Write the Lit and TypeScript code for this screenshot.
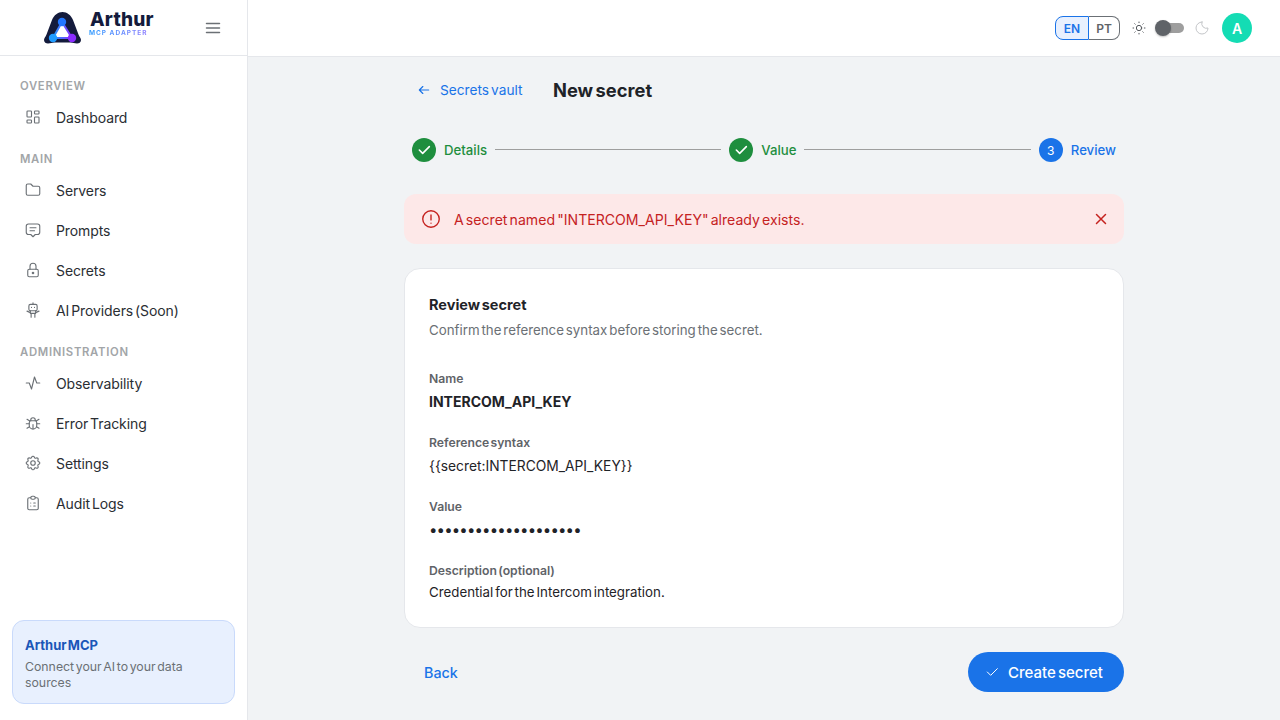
import { LitElement, html, css, svg } from 'lit';
import { customElement } from 'lit/decorators.js';

const icons: Record<string, unknown> = {
  dashboard: svg`<rect x="4" y="4" width="6" height="8" rx="1"/><rect x="4" y="16" width="6" height="4" rx="1"/><rect x="14" y="12" width="6" height="8" rx="1"/><rect x="14" y="4" width="6" height="4" rx="1"/>`,
  folder: svg`<path d="M5 4h4l3 3h7a2 2 0 0 1 2 2v8a2 2 0 0 1-2 2H5a2 2 0 0 1-2-2V6a2 2 0 0 1 2-2"/>`,
  message: svg`<path d="M8 9h8M8 13h6"/><path d="M9 18H6a3 3 0 0 1-3-3V7a3 3 0 0 1 3-3h12a3 3 0 0 1 3 3v8a3 3 0 0 1-3 3h-3l-3 3z"/>`,
  lock: svg`<rect x="5" y="11" width="14" height="10" rx="2"/><circle cx="12" cy="16" r="1"/><path d="M8 11V7a4 4 0 0 1 8 0v4"/>`,
  robot: svg`<rect x="6.500" y="4.500" width="11" height="8.500" rx="2"/><path d="M12 2.500v2M10 8.500h.01M14 8.500h.01M8.500 13v3.500h7V13M4 13.500l4.500 2M20 13.500l-4.500 2M9.500 16.500v5M14.500 16.500v5"/>`,
  activity: svg`<path d="M3 12h4l3 8 4-16 3 8h4"/>`,
  bug: svg`<path d="M9 9V8a3 3 0 0 1 6 0v1"/><path d="M8 9h8a6 6 0 0 1 1 3v3a5 5 0 0 1-10 0v-3a6 6 0 0 1 1-3"/><path d="M3 13h4M17 13h4M12 20v-6M4 19l3.35-2M20 19l-3.35-2M4 7l3.75 2.4M20 7l-3.75 2.4"/>`,
  settings: svg`<path d="M10.3 4.3c.4-1.8 3-1.8 3.4 0a1.7 1.7 0 0 0 2.6 1.1c1.5-.9 3.3.8 2.4 2.4a1.7 1.7 0 0 0 1 2.5c1.8.4 1.8 3 0 3.4a1.7 1.7 0 0 0-1 2.6c.9 1.5-.9 3.3-2.4 2.4a1.7 1.7 0 0 0-2.6 1c-.4 1.8-3 1.8-3.4 0a1.7 1.7 0 0 0-2.6-1c-1.5.9-3.3-.9-2.4-2.4a1.7 1.7 0 0 0-1-2.6c-1.8-.4-1.8-3 0-3.4a1.7 1.7 0 0 0 1-2.5c-.9-1.6.9-3.3 2.4-2.4 1 .6 2.3.1 2.6-1.1"/><circle cx="12" cy="12" r="3"/>`,
  clipboard: svg`<path d="M9 5H7a2 2 0 0 0-2 2v12a2 2 0 0 0 2 2h10a2 2 0 0 0 2-2V7a2 2 0 0 0-2-2h-2"/><rect x="9" y="3" width="6" height="4" rx="2"/><path d="M9 12h.01M13 12h2M9 16h.01M13 16h2"/>`,
};

const navGroups = [
  { title: 'OVERVIEW', items: [{ icon: 'dashboard', label: 'Dashboard' }] },
  {
    title: 'MAIN',
    items: [
      { icon: 'folder', label: 'Servers' },
      { icon: 'message', label: 'Prompts' },
      { icon: 'lock', label: 'Secrets' },
      { icon: 'robot', label: 'AI Providers (Soon)' },
    ],
  },
  {
    title: 'ADMINISTRATION',
    items: [
      { icon: 'activity', label: 'Observability' },
      { icon: 'bug', label: 'Error Tracking' },
      { icon: 'settings', label: 'Settings' },
      { icon: 'clipboard', label: 'Audit Logs' },
    ],
  },
];

const fields = [
  { label: 'Name', value: 'INTERCOM_API_KEY', cls: 'value strong' },
  { label: 'Reference syntax', value: '{{secret:INTERCOM_API_KEY}}', cls: 'value syntax' },
  { label: 'Value', value: '••••••••••••••••••••', cls: 'value dots' },
  { label: 'Description (optional)', value: 'Credential for the Intercom integration.', cls: 'value last' },
];

const check = svg`<path d="M5 12l5 5L20 7"/>`;

@customElement('app-root')
export class AppRoot extends LitElement {
  static styles = css`
    :host {
      display: flex;
      width: 1280px;
      height: 720px;
      overflow: hidden;
      background: #f1f3f5;
      font-family: Inter, 'Liberation Sans', sans-serif;
      font-size: 14px;
      color: #1f2328;
      word-spacing: -0.13em;
    }

    svg.icon {
      fill: none;
      stroke: currentColor;
      stroke-width: 1.5;
      stroke-linecap: round;
      stroke-linejoin: round;
      flex: none;
    }

    .sidebar {
      width: 248px;
      flex: none;
      box-sizing: border-box;
      background: #fff;
      border-right: 1px solid #e5e7eb;
      display: flex;
      flex-direction: column;
    }

    .brand {
      height: 56px;
      box-sizing: border-box;
      border-bottom: 1px solid #e5e7eb;
      display: flex;
      align-items: center;
      padding: 0 26px 0 43px;
    }

    .brand-mark {
      width: 40px;
      height: 32px;
      flex: none;
    }

    .brand-text {
      margin-left: 7px;
      display: flex;
      flex-direction: column;
      margin-top: -9px;
      width: 66px;
    }

    .brand-name {
      font-size: 19px;
      line-height: 21px;
      font-weight: 800;
      color: #141b3c;
      letter-spacing: 0.2px;
    }

    .brand-sub {
      font-size: 6.500px;
      line-height: 7px;
      font-weight: 700;
      letter-spacing: 1px;
      word-spacing: 0;
      margin-left: -1px;
      background: linear-gradient(90deg, #2f9bff, #9d7bff);
      -webkit-background-clip: text;
      background-clip: text;
      color: transparent;
    }

    .menu-btn {
      margin-left: auto;
      color: #6b7075;
      display: flex;
    }

    nav {
      padding-top: 21px;
      flex: 1;
    }

    .group-title {
      padding-left: 20px;
      font-size: 11.300px;
      line-height: 18px;
      font-weight: 600;
      letter-spacing: 0.7px;
      color: #a2a5a8;
      margin-bottom: 2px;
    }

    .group {
      margin-bottom: 13px;
    }

    .item {
      height: 40px;
      display: flex;
      align-items: center;
      padding-left: 24px;
      gap: 14px;
      color: #2a2e33;
      font-size: 14px;
      letter-spacing: -0.1px;
    }

    .item svg {
      color: #6b7075;
    }

    .promo {
      margin: 0 12px 16px;
      height: 84px;
      box-sizing: border-box;
      border: 1px solid #c9dafb;
      border-radius: 12px;
      background: #e8f0fe;
      padding: 14px 12px;
    }

    .promo-title {
      font-size: 13px;
      line-height: 20px;
      font-weight: 700;
      color: #1a56b8;
    }

    .promo-text {
      font-size: 12.300px;
      line-height: 16px;
      color: #6b7075;
      margin-top: 4px;
    }

    .content {
      flex: 1;
      display: flex;
      flex-direction: column;
      min-width: 0;
    }

    .topbar {
      height: 57px;
      box-sizing: border-box;
      background: #fff;
      border-bottom: 1px solid #e5e7eb;
      display: flex;
      align-items: center;
      justify-content: flex-end;
      padding-right: 28px;
    }

    .lang {
      display: flex;
      height: 24px;
      font-size: 12px;
      font-weight: 600;
      color: #5f6368;
    }

    .lang span {
      display: flex;
      align-items: center;
      justify-content: center;
      box-sizing: border-box;
      border: 1px solid #6b7075;
    }

    .lang .en {
      width: 34px;
      background: #e8f0fe;
      color: #1a73e8;
      border: 1px solid #1a73e8;
      border-radius: 8px 0 0 8px;
    }

    .lang .pt {
      width: 31px;
      border-left: none;
      border-radius: 0 8px 8px 0;
    }

    .sun {
      margin-left: 11px;
      color: #55595e;
    }

    .switch {
      margin-left: 8px;
      width: 30px;
      height: 16px;
      display: flex;
      align-items: center;
      position: relative;
    }

    .track {
      margin-left: 1px;
      width: 28px;
      height: 10px;
      border-radius: 5px;
      background: #9e9e9e;
    }

    .thumb {
      position: absolute;
      left: 0;
      top: 0;
      width: 16px;
      height: 16px;
      border-radius: 50%;
      background: #5f6368;
      box-shadow: 0 1px 2px rgba(0, 0, 0, 0.25);
    }

    .moon {
      margin-left: 9px;
      color: #c4c6c9;
    }

    .avatar {
      margin-left: 12px;
      width: 30px;
      height: 30px;
      border-radius: 50%;
      background: #14dcb4;
      color: #fff;
      font-size: 14px;
      font-weight: 600;
      display: flex;
      align-items: center;
      justify-content: center;
    }

    main {
      width: 720px;
      margin: 0 auto;
      padding-top: 13px;
      display: flex;
      flex-direction: column;
    }

    .heading {
      height: 40px;
      display: flex;
      align-items: center;
    }

    .back-link {
      display: flex;
      align-items: center;
      gap: 9px;
      padding-left: 13px;
      color: #1a73e8;
      font-size: 13.700px;
      width: 149px;
      box-sizing: border-box;
    }

    .back-link svg {
      stroke-width: 2;
    }

    h1 {
      margin: 0;
      font-size: 18.300px;
      line-height: 28px;
      font-weight: 700;
      color: #1f2328;
    }

    .stepper {
      margin-top: 28px;
      display: flex;
      align-items: center;
      height: 24px;
    }

    .step {
      display: flex;
      align-items: center;
      gap: 8px;
      padding: 0 8px;
      font-size: 13.200px;
      font-weight: 500;
      color: #1e8e3e;
    }

    .step.active {
      color: #1a73e8;
    }

    .step-dot {
      width: 24px;
      height: 24px;
      border-radius: 50%;
      background: #1e8e3e;
      color: #fff;
      display: flex;
      align-items: center;
      justify-content: center;
      font-size: 12px;
      font-weight: 400;
    }

    .step-dot svg {
      stroke-width: 2.400;
    }

    .step.active .step-dot {
      background: #1a73e8;
    }

    .connector {
      flex: 1;
      height: 1px;
      margin-top: -1px;
      background: #9e9e9e;
    }

    .alert {
      margin-top: 32px;
      height: 50px;
      box-sizing: border-box;
      border-radius: 12px;
      background: #fde8e8;
      color: #c5221f;
      display: flex;
      align-items: center;
      padding: 0 14px 0 16px;
      font-size: 14.100px;
    }

    .alert-text {
      margin-left: 12px;
      flex: 1;
    }

    .card {
      margin-top: 24px;
      height: 360px;
      box-sizing: border-box;
      background: #fff;
      border: 1px solid #e5e7eb;
      border-radius: 16px;
      padding: 24px;
    }

    .card-title {
      font-size: 14.500px;
      line-height: 24px;
      font-weight: 700;
      color: #1f2328;
    }

    .card-sub {
      font-size: 13.300px;
      line-height: 20px;
      margin-top: 3px;
      margin-bottom: 30px;
      color: #6b7075;
    }

    .label {
      font-size: 12.200px;
      line-height: 18px;
      font-weight: 600;
      color: #5f6368;
    }

    .value {
      font-size: 14px;
      line-height: 24px;
      margin-top: 2px;
      margin-bottom: 20px;
      color: #1f2328;
    }

    .value.strong {
      font-weight: 700;
    }

    .value.syntax {
      font-size: 13.800px;
    }

    .value.dots {
      font-size: 15px;
      letter-spacing: -0.85px;
    }

    .value.last {
      font-size: 13.300px;
      line-height: 22px;
      margin: 1px 0 0;
    }

    .actions {
      margin-top: 24px;
      display: flex;
      align-items: center;
      justify-content: space-between;
    }

    .btn-back {
      padding-left: 20px;
      color: #1a73e8;
      font-size: 14.300px;
      font-weight: 500;
    }

    .btn-create {
      width: 156px;
      height: 40px;
      box-sizing: border-box;
      padding-left: 16px;
      display: flex;
      align-items: center;
      gap: 8px;
      border-radius: 20px;
      background: #1a73e8;
      color: #fff;
      font-size: 15px;
      font-weight: 500;
    }
  `;

  private icon(name: string, size = 18) {
    return html`<svg class="icon" width=${size} height=${size} viewBox="0 0 24 24">${icons[name]}</svg>`;
  }

  private renderLogo() {
    return html`<svg class="brand-mark" viewBox="0 0 40 32">
      <defs>
        <linearGradient id="edge" x1="0" y1="0" x2="1" y2="0">
          <stop offset="0" stop-color="#1e9bff" />
          <stop offset="1" stop-color="#8b2cff" />
        </linearGradient>
      </defs>
      <path
        d="M1 28c0-2 1.500-3 2.500-5.500L9 8c2-5 6-8 10.500-8S28 3 30 8l5.500 14.500c1 2.500 2.500 3.500 2.500 5.500 0 2.500-2 3.500-4 3.500-2.500 0-4-1-6.500-1h-16c-2.500 0-4 1-6.500 1-2 0-4-1-4-3.500z"
        fill="#141b3c"
      />
      <path d="M19 10L10 26h19z" fill="#fff" stroke="url(#edge)" stroke-width="2" stroke-linejoin="round" />
      <circle cx="19" cy="10" r="4.200" fill="#2277ff" />
      <circle cx="10" cy="26" r="4.200" fill="#1e9bff" />
      <circle cx="29" cy="26" r="4.200" fill="#8b2cff" />
    </svg>`;
  }

  render() {
    return html`
      <aside class="sidebar">
        <div class="brand">
          ${this.renderLogo()}
          <div class="brand-text">
            <span class="brand-name">Arthur</span>
            <span class="brand-sub">MCP ADAPTER</span>
          </div>
          <span class="menu-btn">
            <svg class="icon" width="16" height="16" viewBox="0 0 16 16"><path d="M1.500 3.500h13M1.500 8h13M1.500 12.500h13" /></svg>
          </span>
        </div>
        <nav>
          ${navGroups.map(
            (g) => html`
              <div class="group">
                <div class="group-title">${g.title}</div>
                ${g.items.map((i) => html`<div class="item">${this.icon(i.icon)}<span>${i.label}</span></div>`)}
              </div>
            `
          )}
        </nav>
        <div class="promo">
          <div class="promo-title">Arthur MCP</div>
          <div class="promo-text">Connect your AI to your data sources</div>
        </div>
      </aside>

      <div class="content">
        <header class="topbar">
          <div class="lang"><span class="en">EN</span><span class="pt">PT</span></div>
          <svg class="icon sun" width="16" height="16" viewBox="0 0 24 24">
            <circle cx="12" cy="12" r="4" />
            <path d="M3 12h1M20 12h1M12 3v1M12 20v1M5.600 5.600l.7.7M17.700 17.700l.7.7M5.600 18.400l.7-.7M17.700 6.300l.7-.7" />
          </svg>
          <div class="switch"><div class="track"></div><div class="thumb"></div></div>
          <svg class="icon moon" width="16" height="16" viewBox="0 0 24 24">
            <path d="M12 3a9 9 0 1 0 9 9 7 7 0 0 1-9-9z" />
          </svg>
          <div class="avatar">A</div>
        </header>

        <main>
          <div class="heading">
            <div class="back-link">
              <svg class="icon" width="14" height="14" viewBox="0 0 24 24"><path d="M20 12H4M10 6l-6 6 6 6" /></svg>
              <span>Secrets vault</span>
            </div>
            <h1>New secret</h1>
          </div>

          <div class="stepper">
            <div class="step">
              <span class="step-dot"><svg class="icon" width="16" height="16" viewBox="0 0 24 24">${check}</svg></span>
              <span>Details</span>
            </div>
            <div class="connector"></div>
            <div class="step">
              <span class="step-dot"><svg class="icon" width="16" height="16" viewBox="0 0 24 24">${check}</svg></span>
              <span>Value</span>
            </div>
            <div class="connector"></div>
            <div class="step active">
              <span class="step-dot">3</span>
              <span>Review</span>
            </div>
          </div>

          <div class="alert">
            <svg class="icon" width="22" height="22" viewBox="0 0 24 24">
              <circle cx="12" cy="12" r="9" />
              <path d="M12 7.500v5.500M12 16.500h.01" />
            </svg>
            <span class="alert-text">A secret named "INTERCOM_API_KEY" already exists.</span>
            <svg class="icon" width="18" height="18" viewBox="0 0 24 24"><path d="M6 6l12 12M18 6L6 18" stroke-width="2" /></svg>
          </div>

          <section class="card">
            <div class="card-title">Review secret</div>
            <div class="card-sub">Confirm the reference syntax before storing the secret.</div>
            ${fields.map(
              (f) => html`
                <div class="label">${f.label}</div>
                <div class=${f.cls}>${f.value}</div>
              `
            )}
          </section>

          <div class="actions">
            <span class="btn-back">Back</span>
            <div class="btn-create">
              <svg class="icon" width="16" height="16" viewBox="0 0 24 24">${check}</svg>
              <span>Create secret</span>
            </div>
          </div>
        </main>
      </div>
    `;
  }
}
